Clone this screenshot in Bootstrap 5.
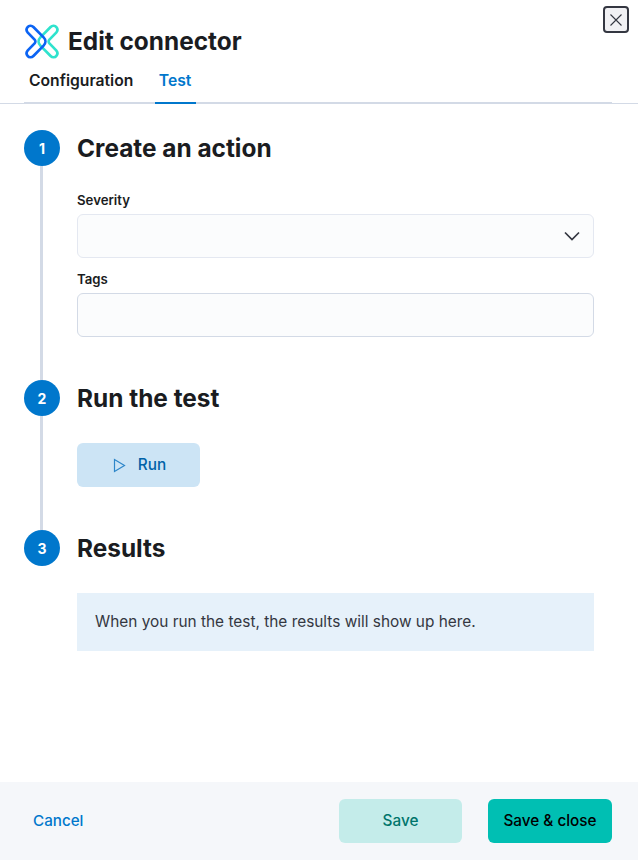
<!doctype html>
<html lang="en">
<head>
<meta charset="utf-8">
<title>Edit connector</title>
<link href="https://cdn.jsdelivr.net/npm/bootstrap@5.3.0/dist/css/bootstrap.min.css" rel="stylesheet">
<style>
html,body{height:100%}
body{font-family:Inter,"Liberation Sans",sans-serif;color:#1a1c21;background:#fff;overflow:hidden}
.flyout{height:860px;width:638px;position:relative}
.close-x{position:absolute;left:603px;top:6px;width:26px;height:27px;border:2px solid #343741;border-radius:4px;background:#f1f1f4;padding:0;display:flex;align-items:center;justify-content:center}
.head-area{padding:24px 26px 0 24px;border-bottom:1px solid #d3dae6;height:104px}
.title-row{height:35px;gap:9px}
.logo-mark{margin-left:1px;flex:none}
.title-row h1{font-size:24.4px;font-weight:700;line-height:35px;margin:0;letter-spacing:0;color:#1a1c21}
.tab-bar{margin-top:4px;border-bottom:2px solid #d3dae6;height:41px;gap:17.5px;padding-left:1px}
.tab-item{font-size:15.7px;font-weight:600;color:#1a1c21;padding:6px 4px 0;height:41px;line-height:24px;text-decoration:none}
.tab-item.on{color:#0077cc;border-bottom:2px solid #0077cc;padding-right:5px}
.steps{padding:26px 44px 0 24px}
.step-row{display:flex;gap:17px;position:relative}
.step-row:not(.last)::before{content:"";position:absolute;left:16px;top:36px;bottom:0;width:3px;background:#d3dae6}
.step-dot{width:36px;height:36px;border-radius:50%;background:#0077cc;color:#fff;font-size:14px;font-weight:700;display:flex;align-items:center;justify-content:center;flex:none;position:relative}
.step-main{flex:1;min-width:0}
.step-main h2{font-size:24.4px;font-weight:700;line-height:37px;margin:0;letter-spacing:0;color:#1a1c21}
.step-one{height:250px}
.step-two{height:150px}
.fld-label{font-size:13.200px;font-weight:600;line-height:20px;display:block;margin:0 0 4px}
.fld-box{height:44px;background:#fbfcfd;border:1px solid #e4e8f1;border-radius:6px;display:flex;align-items:center;justify-content:flex-end;padding-right:13px}
.fld-box.tags{border-color:#d3dae6}
.first-field{margin-top:23px}
.second-field{margin-top:11px}
.btn-run{width:123px;height:44px;margin-top:26px;background:#cce4f5;border:0;border-radius:6px;color:#0062a8;font-size:15.300px;font-weight:500;gap:12px;padding:0 0 0 2px}
.btn-run:hover{background:#cce4f5;color:#0062a8}
.note-box{margin-top:26px;height:58px;background:#e6f1fa;color:#343741;font-size:15.400px;line-height:58px;padding-left:18px}
.foot-bar{margin-top:auto;height:78px;background:#f5f7fa;padding:0 26px 0 33px}
.link-cancel{color:#0077cc;font-size:15.200px;font-weight:500;text-decoration:none}
.btn-sv{height:44px;border:0;border-radius:6px;font-size:15.300px;font-weight:500;padding:0}
.btn-save{width:123px;background:#c4ecea;color:#00756c;margin-right:26px}
.btn-save:hover{background:#c4ecea;color:#00756c}
.btn-close-save{width:124px;background:#00bfb3;color:#000}
.btn-close-save:hover{background:#00bfb3;color:#000}
</style>
</head>
<body>
<div class="flyout d-flex flex-column">
  <button class="close-x" type="button" aria-label="Close">
    <svg width="14" height="14" viewBox="0 0 14 14" fill="none" stroke="#343741" stroke-width="1.1"><path d="M1.5 1.5l11 11M12.5 1.5l-11 11"/></svg>
  </button>
  <div class="head-area">
    <div class="title-row d-flex align-items-center">
      <svg class="logo-mark" width="34" height="35" viewBox="0 0 34 35" fill="none" stroke-width="2.7" stroke-linejoin="round">
        <g transform="translate(34 0) scale(-1 1)">
          <path d="M2.600 3.200C4 1.400 6.600 1.200 8.400 3L18.600 13.400C21 15.800 21 19.200 18.600 21.600L8.400 32C6.600 33.800 4 33.600 2.600 31.800C1.200 30.200 1.400 28 2.800 26.400L9.600 19.400C10.600 18.400 10.600 16.600 9.600 15.600L2.800 8.600C1.400 7 1.200 4.800 2.600 3.200Z" stroke="#2fe3cd"/>
        </g>
        <path d="M2.600 3.200C4 1.400 6.600 1.200 8.400 3L18.600 13.400C21 15.800 21 19.200 18.600 21.600L8.400 32C6.600 33.800 4 33.600 2.600 31.800C1.200 30.200 1.400 28 2.800 26.400L9.600 19.400C10.600 18.400 10.600 16.600 9.600 15.600L2.800 8.600C1.400 7 1.200 4.800 2.600 3.200Z" stroke="#0b64f4"/>
      </svg>
      <h1>Edit connector</h1>
    </div>
    <nav class="tab-bar d-flex">
      <a class="tab-item" href="#">Configuration</a>
      <a class="tab-item on" href="#">Test</a>
    </nav>
  </div>
  <div class="steps">
    <div class="step-row step-one">
      <div class="step-dot">1</div>
      <div class="step-main">
        <h2>Create an action</h2>
        <div class="first-field">
          <label class="fld-label">Severity</label>
          <div class="fld-box">
            <svg width="16" height="10" viewBox="0 0 16 10" fill="none" stroke="#343741" stroke-width="1.7"><path d="M1 1.500l7 7 7-7"/></svg>
          </div>
        </div>
        <div class="second-field">
          <label class="fld-label">Tags</label>
          <div class="fld-box tags"></div>
        </div>
      </div>
    </div>
    <div class="step-row step-two">
      <div class="step-dot">2</div>
      <div class="step-main">
        <h2>Run the test</h2>
        <button class="btn btn-run d-flex align-items-center justify-content-center" type="button">
          <svg width="13" height="15" viewBox="0 0 13 15" fill="none" stroke="#2d86c9" stroke-width="1.2"><path d="M1.500 1.500v12l10-6Z"/></svg>
          Run
        </button>
      </div>
    </div>
    <div class="step-row last">
      <div class="step-dot">3</div>
      <div class="step-main">
        <h2>Results</h2>
        <div class="note-box">When you run the test, the results will show up here.</div>
      </div>
    </div>
  </div>
  <div class="foot-bar d-flex align-items-center">
    <a class="link-cancel" href="#">Cancel</a>
    <div class="ms-auto d-flex">
      <button class="btn btn-sv btn-save" type="button">Save</button>
      <button class="btn btn-sv btn-close-save" type="button">Save &amp; close</button>
    </div>
  </div>
</div>
<script src="https://cdn.jsdelivr.net/npm/bootstrap@5.3.0/dist/js/bootstrap.bundle.min.js"></script>
</body>
</html>
